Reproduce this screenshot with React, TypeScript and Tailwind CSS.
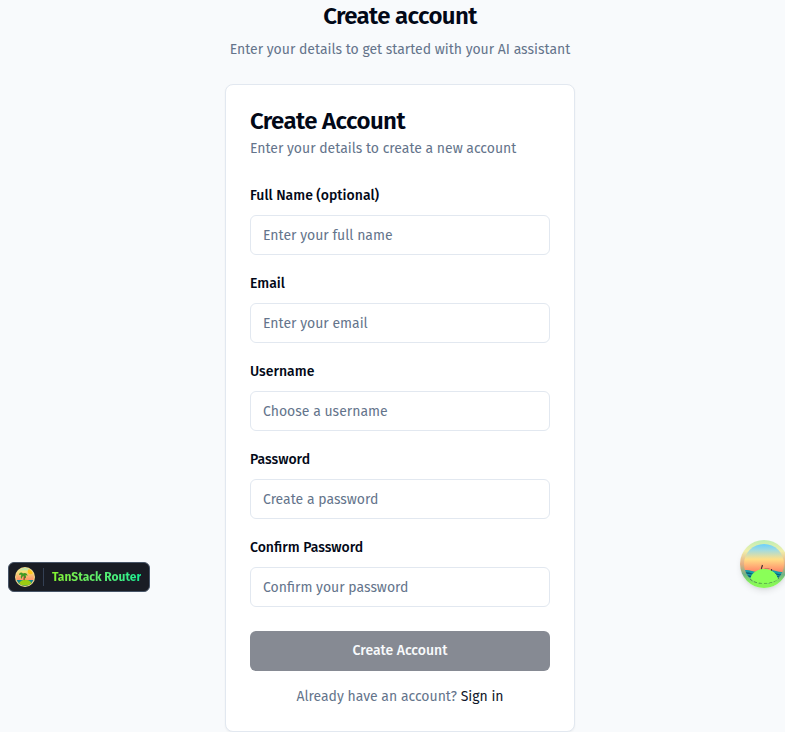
import { useId } from "react";

const fields = [
  { id: "fullName", label: "Full Name (optional)", placeholder: "Enter your full name", type: "text" },
  { id: "email", label: "Email", placeholder: "Enter your email", type: "email" },
  { id: "username", label: "Username", placeholder: "Choose a username", type: "text" },
  { id: "password", label: "Password", placeholder: "Create a password", type: "password" },
  { id: "confirm", label: "Confirm Password", placeholder: "Confirm your password", type: "password" },
];

function RouterIsland() {
  const id = useId();
  return (
    <svg viewBox="0 0 40 40" className="size-5 shrink-0" aria-hidden="true">
      <defs>
        <linearGradient id={id + "sky"} x1="0" y1="0" x2="0" y2="1">
          <stop offset="0" stopColor="#8ee4d4" />
          <stop offset=".22" stopColor="#f4e27a" />
          <stop offset=".6" stopColor="#ff9a6c" />
        </linearGradient>
        <clipPath id={id + "clip"}><circle cx="20" cy="20" r="18" /></clipPath>
      </defs>
      <circle cx="20" cy="20" r="20" fill="#f3dc8b" />
      <g clipPath={`url(#${id}clip)`}>
        <rect width="40" height="40" fill={`url(#${id}sky)`} />
        <circle cx="31" cy="9" r="5.5" fill="#ffc51d" />
        <path d="M0 26h40v14H0z" fill="#16878f" />
        <path d="M8 32c5-9 21-9 25 0l-4 5H12z" fill="#9ccb12" />
        <path d="M17 14c2 4 2 8 1 12" fill="none" stroke="#774522" strokeWidth="2.4" />
        <path d="M16 13c-3-4-8-2-8 3 3-1 4-1 5 0-2 2-2 5 0 8 1-4 3-6 4-7 2 2 3 4 4 6 2-2 1-5 0-6 2-1 3 0 4 1 0-5-5-8-9-5z" fill="#3f9b24" />
      </g>
    </svg>
  );
}

function QueryIsland() {
  const id = useId();
  return (
    <svg viewBox="0 0 48 48" className="size-12" aria-hidden="true">
      <defs>
        <linearGradient id={id + "sky"} x1="0" y1="0" x2="0" y2="1">
          <stop offset=".08" stopColor="#68cfff" />
          <stop offset=".22" stopColor="#a6dcdc" />
          <stop offset=".4" stopColor="#ffdf87" />
          <stop offset=".66" stopColor="#ff8768" />
        </linearGradient>
        <linearGradient id={id + "rim"} x1="0" y1="0" x2="0" y2="1">
          <stop offset="0" stopColor="#bdeeb5" />
          <stop offset=".23" stopColor="#f0efaa" />
          <stop offset=".5" stopColor="#e5ad83" />
          <stop offset=".72" stopColor="#70b486" />
          <stop offset=".9" stopColor="#87f657" />
        </linearGradient>
        <clipPath id={id + "clip"}><circle cx="24" cy="24" r="20" /></clipPath>
      </defs>
      <circle cx="24" cy="24" r="24" fill={`url(#${id}rim)`} />
      <g clipPath={`url(#${id}clip)`}>
        <rect width="48" height="48" fill={`url(#${id}sky)`} />
        <path d="M0 31q6-2 12 0t12 0 12 0 12 0v17H0z" fill="#159fa9" />
        <path d="M0 34q6-2 12 0t12 0 12 0 12 0M0 37q7-2 13 0t13 0 13 0 13 0" fill="none" stroke="#075d74" strokeWidth="1.3" />
        <path d="M21.5 30v-2l1-3M31.5 32v-3" stroke="#4d3036" strokeWidth="1.2" />
        <path d="M24.5 28.5h5" stroke="#c66e5b" strokeWidth=".8" />
        <ellipse cx="24" cy="41" rx="14" ry="12" fill="#8aff58" />
      </g>
      <path d="M10 39c5 6 23 6 29-1" fill="none" stroke="#315329" strokeWidth=".6" strokeDasharray="3 2" opacity=".8" />
      <path d="M12 39c1-13 23-13 26 0-6 5-19 5-26 0z" fill="#8aff58" />
    </svg>
  );
}

export default function App() {
  return (
    <div className="h-screen w-full overflow-hidden bg-[#f8fafc] font-['Fira_Sans','Noto_Sans',sans-serif] text-[#020817]">
      <main className="ml-[225px] flex w-[350px] flex-col items-center">
        <h1 className="whitespace-nowrap text-2xl font-semibold tracking-tight">Create account</h1>
        <p className="mt-2 whitespace-nowrap text-sm tracking-[-0.015px] text-[#64748b]">
          Enter your details to get started with your AI assistant
        </p>
        <section className="mt-6 flex h-[648px] w-full shrink-0 flex-col rounded-lg border border-[#e2e8f0] bg-white px-6 pt-6 shadow-xs">
          <h2 className="whitespace-nowrap text-2xl leading-6 font-semibold tracking-[-0.57px]">Create Account</h2>
          <p className="mt-1.5 whitespace-nowrap text-sm tracking-[-0.015px] text-[#64748b]">Enter your details to create a new account</p>
          <form className="mt-6 flex flex-col">
            <div className="flex flex-col gap-4">
              {fields.map((field) => (
                <div key={field.id} className="flex h-[72px] flex-col justify-between">
                  <label htmlFor={field.id} className="whitespace-nowrap pt-[3px] text-sm font-medium">{field.label}</label>
                  <input id={field.id} type={field.type} placeholder={field.placeholder} className="h-10 w-full rounded-md border border-[#e2e8f0] bg-white px-3 text-sm placeholder:text-[#64748b]" />
                </div>
              ))}
            </div>
            <button type="button" disabled className="mt-6 h-10 rounded-md bg-[#868a93] text-sm font-medium text-[#f8fafc]">Create Account</button>
            <p className="mt-4 whitespace-nowrap text-center text-sm text-[#64748b]">
              Already have an account? <a href="#" className="text-[#0f172a]">Sign in</a>
            </p>
          </form>
        </section>
      </main>
      <button type="button" className="fixed top-[562px] left-2 flex h-[30px] w-[142px] items-center rounded-md border border-[#475467] bg-[#191c24] pl-1.5">
        <RouterIsland />
        <span className="ml-2 h-[18px] w-px bg-[#344054]" />
        <span className="ml-2 whitespace-nowrap bg-linear-to-r from-[#84f22c] to-[#10ed91] bg-clip-text text-xs font-bold tracking-[-0.02px] text-transparent">TanStack Router</span>
      </button>
      <button type="button" className="fixed top-[540px] left-[740px] size-12 rounded-full shadow-md">
        <QueryIsland />
      </button>
    </div>
  );
}
